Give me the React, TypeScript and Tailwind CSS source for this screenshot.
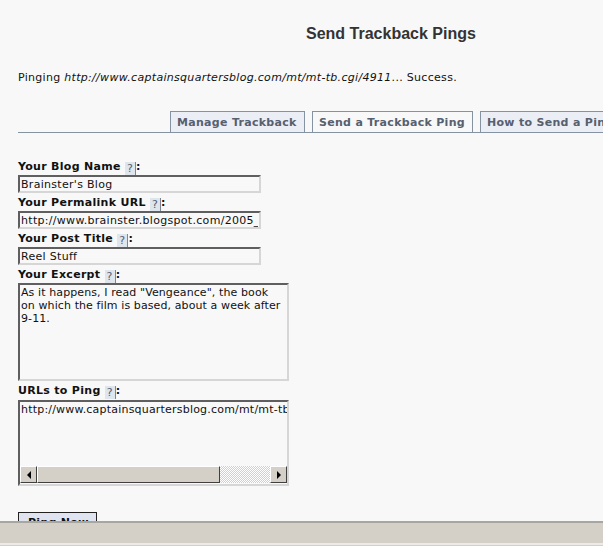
import React from 'react';

const font = { fontFamily: '"DejaVu Sans", Verdana, sans-serif' };

const Help: React.FC = () => (
  <span className="inline-block h-[13px] px-[2px] leading-[13px] bg-[#dfe5ec] border-r border-[#7d8794] text-[#56606c] font-normal align-[-2px]">
    ?
  </span>
);

const Label: React.FC<{ text: string }> = ({ text }) => (
  <div className="h-[13px] leading-[13px] font-bold text-[#111]">
    {text} <Help />:
  </div>
);

const inset =
  'border-2 border-t-[#5f5f5f] border-l-[#5f5f5f] border-b-[#d6d6d6] border-r-[#d6d6d6] bg-[#f8f8f8] text-[#111] outline-none';

const Field: React.FC<{ label: string; value: string }> = ({ label, value }) => (
  <div className="flex flex-col">
    <Label text={label} />
    <input
      readOnly
      defaultValue={value}
      className={`${inset} mt-[2px] mb-[3px] h-[18px] w-[243px] px-[1px] text-[11px] leading-[14px] tracking-[0.3px]`}
      style={font}
    />
  </div>
);

const tabs = [
  { name: 'Manage Trackback', active: false, w: 'w-[135px]' },
  { name: 'Send a Trackback Ping', active: true, w: 'w-[161px]' },
  { name: 'How to Send a Ping', active: false, w: 'w-[150px]' },
];

const Arrow: React.FC<{ dir: 'left' | 'right' }> = ({ dir }) => (
  <div className="w-[17px] h-[17px] bg-[#d4d0c8] border border-t-white border-l-white border-b-[#404040] border-r-[#404040] flex items-center justify-center shrink-0">
    <svg width="6" height="8" viewBox="0 0 6 8">
      {dir === 'left' ? <path d="M5 0 L1 4 L5 8 Z" fill="#000" /> : <path d="M1 0 L5 4 L1 8 Z" fill="#000" />}
    </svg>
  </div>
);

export default function App() {
  return (
    <div className="h-[546px] w-[603px] overflow-hidden flex flex-col bg-[#f8f8f8] text-[11px] tracking-[0.3px]" style={font}>
      <div className="flex-1 overflow-hidden">
        <h1
          className="mt-[25px] h-[18px] leading-[18px] text-[16px] font-bold text-[#333] pl-[306px] whitespace-nowrap tracking-normal"
          style={{ fontFamily: '"Liberation Sans", Arial, sans-serif' }}
        >
          Send Trackback Pings
        </h1>

        <p className="mt-[28px] pl-[18px] h-[13px] leading-[13px] text-[#111] whitespace-nowrap">
          Pinging <i>http://www.captainsquartersblog.com/mt/mt-tb.cgi/4911</i>... Success.
        </p>

        <div className="mt-[27px] ml-[18px] flex gap-[7px] pl-[152px] border-b border-[#8592a2] h-[22px] overflow-hidden">
          {tabs.map((t) => (
            <div
              key={t.name}
              className={`${t.w} shrink-0 h-[21px] border border-b-0 border-[#8592a2] px-[6px] leading-[21px] font-bold text-[#56606e] whitespace-nowrap ${
                t.active ? 'bg-[#f8f8f8]' : 'bg-[#eceef6]'
              }`}
            >
              {t.name}
            </div>
          ))}
        </div>

        <div className="mt-[27px] pl-[18px] flex flex-col">
          <Field label="Your Blog Name" value="Brainster's Blog" />
          <Field label="Your Permalink URL" value="http://www.brainster.blogspot.com/2005_" />
          <Field label="Your Post Title" value="Reel Stuff" />

          <Label text="Your Excerpt" />
          <textarea
            readOnly
            defaultValue={'As it happens, I read "Vengeance", the book\non which the film is based, about a week after\n9-11.'}
            className={`${inset} mt-[2px] mb-[3px] h-[98px] w-[271px] px-[1px] py-[1px] text-[11px] leading-[13px] tracking-[0.1px] resize-none overflow-hidden whitespace-pre`}
            style={font}
          />

          <Label text="URLs to Ping" />
          <div className={`${inset} mt-[3px] h-[86px] w-[271px] flex flex-col overflow-hidden`}>
            <div className="flex-1 px-[1px] py-[1px] leading-[13px] tracking-[0.2px] whitespace-nowrap overflow-hidden">
              http://www.captainsquartersblog.com/mt/mt-tb.cgi/4911
            </div>
            <div className="flex h-[17px] mb-[1px]">
              <Arrow dir="left" />
              <div className="w-[183px] h-[17px] bg-[#d4d0c8] border border-t-white border-l-white border-b-[#404040] border-r-[#404040] shrink-0" />
              <div className="flex-1 bg-[repeating-conic-gradient(#d4d0c8_0_25%,#ffffff_0_50%)] bg-[length:2px_2px]" />
              <Arrow dir="right" />
            </div>
          </div>

          <button className="mt-[26px] w-[79px] h-[22px] text-left pl-[9px] bg-[#dfe4f0] border border-[#222] font-bold text-[#111] leading-[18px] text-[11px] tracking-[0.3px]" style={font}>
            Ping Now
          </button>
        </div>
      </div>

      <div className="h-[25px] shrink-0 bg-[#d4d0c8] border-t-2 border-[#a8a6a0] flex flex-col justify-end">
        <div className="h-[2px] bg-[#ecebe8] mb-[1px]" />
      </div>
    </div>
  );
}
